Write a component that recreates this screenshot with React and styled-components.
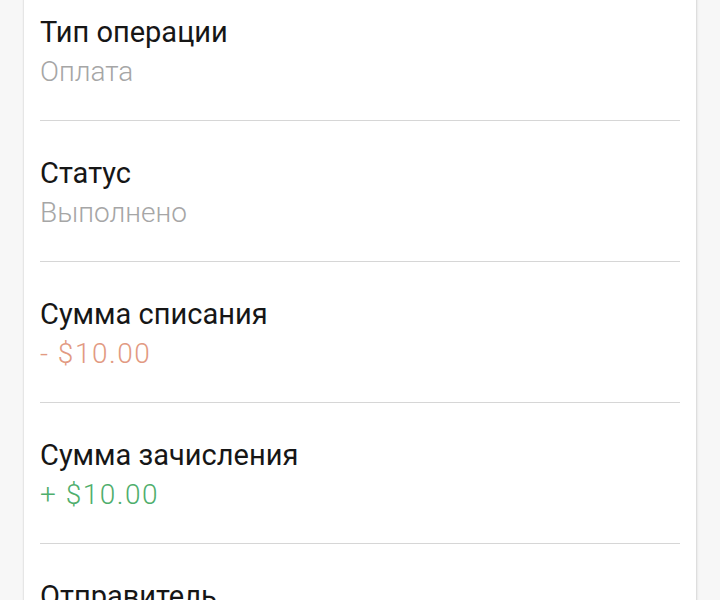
import React from "react";
import styled, { createGlobalStyle } from "styled-components";

const rows = [
  { label: "Тип операции", value: "Оплата", tone: "muted" },
  { label: "Статус", value: "Выполнено", tone: "muted" },
  { label: "Сумма списания", value: "- $10.00", tone: "debit" },
  { label: "Сумма зачисления", value: "+ $10.00", tone: "credit" },
  { label: "Отправитель", value: "Кошелёк", tone: "muted" },
];

const toneColors = {
  muted: "#a6a6a6",
  debit: "#e29a82",
  credit: "#4fae6c",
};

const App = () => {
  return (
    <>
      <GlobalStyle />
      <Page>
        <Card>
          {rows.map((row, i) => (
            <Row key={i}>
              <Label>{row.label}</Label>
              <Value tone={row.tone}>{row.value}</Value>
            </Row>
          ))}
        </Card>
      </Page>
    </>
  );
};

const GlobalStyle = createGlobalStyle`
  html, body {
    margin: 0;
    height: 100%;
    overflow: hidden;
    background: #f7f7f7;
  }
`;

const Page = styled.div`
  width: 720px;
  height: 600px;
  padding: 0 24px;
  box-sizing: border-box;
  overflow: hidden;
  font-family: Roboto, "Liberation Sans", sans-serif;
`;

const Card = styled.div`
  margin-top: -20px;
  background: #ffffff;
  padding: 0 16px;
  box-shadow: 0 0 2px rgba(0, 0, 0, 0.18), 1px 0 3px rgba(0, 0, 0, 0.08);
`;

const Row = styled.div`
  height: 80px;
  padding: 32px 0 28px;
  box-sizing: content-box;
  display: flex;
  flex-direction: column;
  border-bottom: 1px solid #d6d6d6;
`;

const Label = styled.div`
  font-size: 29px;
  line-height: 40px;
  color: #161616;
`;

const Value = styled.div`
  font-size: 28px;
  line-height: 40px;
  font-weight: 300;
  white-space: pre;
  letter-spacing: ${(p) => (p.tone === "muted" ? "0" : "1.5px")};
  color: ${(p) => toneColors[p.tone]};
`;

export default App;
